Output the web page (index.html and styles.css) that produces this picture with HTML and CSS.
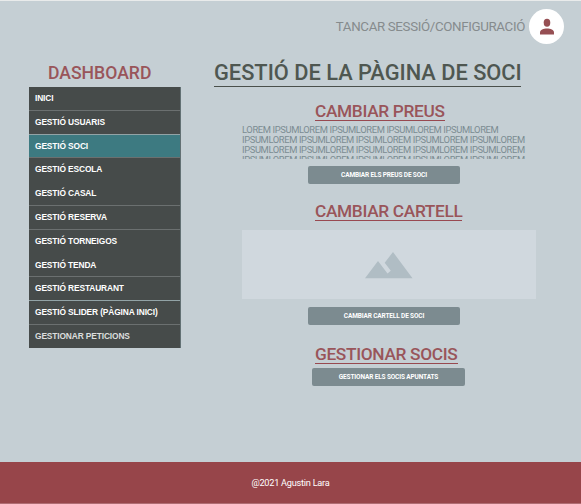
FILE: index.html
```html
<!DOCTYPE html>
<html lang="ca">
<head>
<meta charset="utf-8">
<title>Gestió de la pàgina de soci</title>
<link rel="stylesheet" href="styles.css">
</head>
<body>
<header class="topbar">
  <span class="session">TANCAR SESSIÓ/CONFIGURACIÓ</span>
  <span class="avatar"><svg viewBox="0 0 14 17" width="14" height="17"><ellipse cx="7" cy="4.8" rx="3.3" ry="4"/><path d="M0 16.4V14.6C0 12 3.5 10.6 7 10.6s7 1.4 7 4v1.8z"/></svg></span>
</header>
<div class="layout">
  <aside class="sidebar">
    <h2 class="side-title"><span>DASHBOARD</span></h2>
    <nav class="menu">
      <a>INICI</a>
      <a class="lit">GESTIÓ USUARIS</a>
      <a class="active">GESTIÓ SOCI</a>
      <a class="plain">GESTIÓ ESCOLA</a>
      <a>GESTIÓ CASAL</a>
      <a>GESTIÓ RESERVA</a>
      <a class="plain">GESTIÓ TORNEIGOS</a>
      <a>GESTIÓ TENDA</a>
      <a class="lit">GESTIÓ RESTAURANT</a>
      <a>GESTIÓ SLIDER (PÀGINA INICI)</a>
      <a class="last">GESTIONAR PETICIONS</a>
    </nav>
  </aside>
  <main class="content">
    <h1 class="title">GESTIÓ DE LA PÀGINA DE SOCI</h1>
    <section class="prices">
      <h2 class="heading h-prices">CAMBIAR PREUS</h2>
      <p class="text">LOREM IPSUMLOREM IPSUMLOREM IPSUMLOREM IPSUMLOREM<br>IPSUMLOREM IPSUMLOREM IPSUMLOREM IPSUMLOREM IPSUMLOREM<br>IPSUMLOREM IPSUMLOREM IPSUMLOREM IPSUMLOREM IPSUMLOREM<br>IPSUMLOREM IPSUMLOREM IPSUMLOREM IPSUMLOREM IPSUMLOREM</p>
      <button class="button"><span>CAMBIAR ELS PREUS DE SOCI</span></button>
    </section>
    <section class="poster">
      <h2 class="heading h-poster">CAMBIAR CARTELL</h2>
      <div class="image"><svg viewBox="0 0 48 27" width="48" height="27"><path d="M0 26.3 13 9l9.5 12.5 3.3-2.7-6.1-8.1L28 0l19.5 26.3z"/></svg></div>
      <button class="button"><span>CAMBIAR CARTELL DE SOCI</span></button>
    </section>
    <section class="members">
      <h2 class="heading h-members">GESTIONAR SOCIS</h2>
      <button class="button wide"><span>GESTIONAR ELS SOCIS APUNTATS</span></button>
    </section>
  </main>
</div>
<footer class="footer">@2021 Agustin Lara</footer>
</body>
</html>
```
FILE: styles.css
```css
* { box-sizing: border-box; }
body {
  margin: 0;
  width: 581px;
  height: 504px;
  overflow: hidden;
  display: flex;
  flex-direction: column;
  background: #c5cfd4;
  border-top: 1px solid #e9ebeb;
  font-family: Roboto, "Liberation Sans", sans-serif;
}
h1, h2, p { margin: 0; }
.topbar {
  height: 56px;
  padding: 8px 17px 0 0;
  display: flex;
  justify-content: flex-end;
  align-items: flex-start;
}
.session {
  margin: 9px 4px 0 0;
  font-size: 13.3px;
  line-height: 18px;
  letter-spacing: -.34px;
  color: #858b8d;
  white-space: nowrap;
}
.avatar {
  width: 35px;
  height: 35px;
  border-radius: 50%;
  background: #fff;
  display: flex;
  align-items: center;
  justify-content: center;
}
.avatar svg { fill: #964f53; }
.layout { display: flex; height: 405px; }
.sidebar { width: 181px; padding-left: 29px; flex: none; }
.side-title {
  height: 30px;
  padding: 6px 0 0 19px;
  font-size: 17.6px;
  line-height: 20px;
  font-weight: 500;
  color: #99555a;
}
.menu { border-right: 1px solid #637174; background: #464b4a; }
.menu a {
  display: block;
  height: 23.8px;
  padding-left: 6px;
  border-bottom: 1px solid #6b7070;
  font: bold 8.4px/23px "Liberation Sans", sans-serif;
  letter-spacing: -.13px;
  color: #fff;
  white-space: nowrap;
}
.menu .lit { border-bottom-color: #92a3a6; }
.menu .active { background: #3d7a81; }
.menu .plain, .menu .last { border-bottom-color: transparent; }
.menu .last { height: 23px; color: #dcdedd; }
.content { width: 400px; }
.title {
  width: 307px;
  height: 30px;
  margin: 0 0 15px 33px;
  padding-top: 3px;
  border-bottom: 1px solid #4a504b;
  font-size: 21.8px;
  line-height: 25px;
  font-weight: 500;
  color: #4f5751;
  white-space: nowrap;
}
.heading {
  height: 19px;
  border-bottom: 1px solid #984950;
  margin-left: 134px;
  font-size: 17.3px;
  line-height: 18px;
  letter-spacing: -.33px;
  font-weight: 500;
  color: #99555a;
  white-space: nowrap;
}
.h-prices { width: 130px; }
.h-poster { width: 147px; }
.h-members { width: 143px; }
.text {
  width: 294px;
  height: 34px;
  margin: 4px 0 7px 61px;
  overflow: hidden;
  font-size: 9.4px;
  line-height: 10px;
  letter-spacing: -.38px;
  color: #7b8c92;
  white-space: nowrap;
}
.button {
  display: flex;
  align-items: center;
  justify-content: center;
  width: 152px;
  height: 18px;
  margin-left: 127px;
  padding: 0;
  border: 0;
  border-radius: 2px;
  background: #7c8b90;
  color: #fff;
  font: bold 6.5px/8px Roboto, sans-serif;
  letter-spacing: -.14px;
  white-space: nowrap;
}
.poster { margin-top: 18px; }
.image {
  width: 294px;
  height: 69px;
  margin: 9px 0 8px 61px;
  padding: 22px 0 0 123px;
  background: #d0d8de;
}
.image svg { display: block; fill: #b0bdc4; }
.members { margin-top: 20px; }
.wide { width: 153px; margin: 4px 0 0 131px; }
.footer {
  height: 42px;
  border-bottom: 1px solid #b06d73;
  background: #97454a;
  color: #fff;
  text-align: center;
  font-size: 9.2px;
  line-height: 42px;
  letter-spacing: -.25px;
}
```
